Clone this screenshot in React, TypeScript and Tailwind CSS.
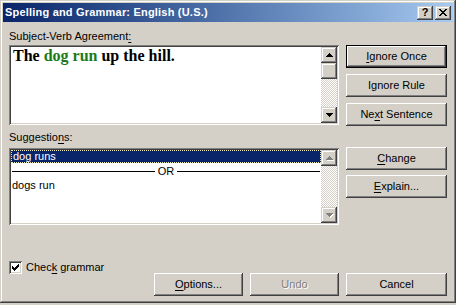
import React from "react";

const raised =
  "shadow-[inset_-1px_-1px_#404040,inset_1px_1px_#ffffff,inset_-2px_-2px_#808080,inset_2px_2px_#d4d0c8]";
const raisedSmall =
  "shadow-[inset_-1px_-1px_#404040,inset_1px_1px_#d4d0c8,inset_-2px_-2px_#808080,inset_2px_2px_#ffffff]";
const defaultBtn =
  "shadow-[inset_0_0_0_1px_#000000,inset_-2px_-2px_#404040,inset_2px_2px_#ffffff,inset_-3px_-3px_#808080]";
const sunken =
  "shadow-[inset_1px_1px_#808080,inset_-1px_-1px_#ffffff,inset_2px_2px_#404040,inset_-2px_-2px_#d4d0c8]";

const Arrow = ({ down, disabled }: { down?: boolean; disabled?: boolean }) => {
  const d = down
    ? "M0 0h7v1h-7z M1 1h5v1h-5z M2 2h3v1h-3z M3 3h1v1h-1z"
    : "M3 0h1v1h-1z M2 1h3v1h-3z M1 2h5v1h-5z M0 3h7v1h-7z";
  return (
    <svg width="8" height="5" viewBox="0 0 8 5" shapeRendering="crispEdges">
      {disabled && <path d={d} fill="#ffffff" transform="translate(1 1)" />}
      <path d={d} fill={disabled ? "#808080" : "#000000"} />
    </svg>
  );
};

const ScrollBtn = ({ down, disabled }: { down?: boolean; disabled?: boolean }) => (
  <div className={`w-[16px] h-[16px] bg-[#d4d0c8] flex items-center justify-center pl-[1px] ${raisedSmall}`}>
    <Arrow down={down} disabled={disabled} />
  </div>
);

const ScrollBar = ({ thumb, disabled }: { thumb?: boolean; disabled?: boolean }) => (
  <div className="w-[16px] h-full flex flex-col">
    <ScrollBtn disabled={disabled} />
    {thumb && <div className={`w-[16px] h-[16px] bg-[#d4d0c8] ${raisedSmall}`} />}
    <div className="flex-1 bg-[repeating-conic-gradient(#d4d0c8_0%_25%,#ffffff_0%_50%)] bg-[length:2px_2px]" />
    <ScrollBtn down disabled={disabled} />
  </div>
);

const Button = ({
  children,
  w = "w-[101px]",
  isDefault,
  disabled,
}: {
  children: React.ReactNode;
  w?: string;
  isDefault?: boolean;
  disabled?: boolean;
}) => (
  <div
    className={`${w} h-[23px] bg-[#d4d0c8] flex items-center justify-center ${isDefault ? defaultBtn : raised} ${
      disabled ? "text-[#808080] [text-shadow:1px_1px_#ffffff]" : "text-black"
    }`}
  >
    <span>{children}</span>
  </div>
);

const U = ({ children }: { children: React.ReactNode }) => (
  <span className="underline underline-offset-[2px]">{children}</span>
);

export default function App() {
  return (
    <div className="w-[456px] h-[305px] bg-[#d4d0c8] font-['Liberation_Sans',Arial,sans-serif] text-[11px] leading-[13px] text-black">
      <div className="h-[303px] flex flex-col p-[3px] bg-[#d4d0c8] shadow-[inset_-1px_-1px_#404040,inset_1px_1px_#d4d0c8,inset_-2px_-2px_#808080,inset_2px_2px_#ffffff]">
        {/* title bar */}
        <div className="h-[19px] flex items-center pl-[2px] pr-[2px] bg-linear-to-r from-[#0a246a] to-[#a6caf0]">
          <span className="text-white font-bold tracking-[0.2px]">Spelling and Grammar: English (U.S.)</span>
          <div className="ml-auto flex gap-[2px]">
            <div className={`w-[16px] h-[14px] bg-[#d4d0c8] flex items-center justify-center font-bold text-[11px] leading-[11px] ${raisedSmall}`}>
              ?
            </div>
            <div className={`w-[16px] h-[14px] bg-[#d4d0c8] flex items-center justify-center ${raisedSmall}`}>
              <svg width="8" height="7" viewBox="0 0 8 7" shapeRendering="crispEdges">
                <path
                  d="M0 0h2v1h-2z M6 0h2v1h-2z M1 1h2v1h-2z M5 1h2v1h-2z M2 2h4v1h-4z M3 3h2v1h-2z M2 4h4v1h-4z M1 5h2v1h-2z M5 5h2v1h-2z M0 6h2v1h-2z M6 6h2v1h-2z"
                  fill="#000000"
                />
              </svg>
            </div>
          </div>
        </div>

        <div className="flex-1 flex flex-col px-[6px]">
          {/* error sentence */}
          <div className="flex">
            <div className="w-[330px] flex flex-col pt-[8px]">
              <div className="h-[13px]">
                Subject-Verb Agreement<U>:</U>
              </div>
              <div className={`mt-[2px] w-[330px] h-[80px] p-[2px] bg-white flex ${sunken}`}>
                <div className="flex-1 pl-[2px] font-['Liberation_Serif','Times_New_Roman',serif] font-bold text-[16px] leading-[18px]">
                  The <span className="text-[#1a7a1a]">dog run</span> up the hill.
                </div>
                <ScrollBar thumb />
              </div>
            </div>
            <div className="ml-[7px] pt-[23px] flex flex-col gap-[6px]">
              <Button isDefault>
                <U>I</U>gnore Once
              </Button>
              <Button>Ignore Rule</Button>
              <Button>
                Ne<U>x</U>t Sentence
              </Button>
            </div>
          </div>

          {/* suggestions */}
          <div className="flex">
            <div className="w-[330px] flex flex-col pt-[5px]">
              <div className="h-[13px]">
                Suggestio<U>n</U>s:
              </div>
              <div className={`mt-[4px] w-[330px] h-[77px] p-[2px] bg-white flex ${sunken}`}>
                <div className="flex-1 flex flex-col">
                  <div className="h-[13px] bg-[#0a246a] text-white pl-[1px] border border-dotted border-[#e8e8b0] leading-[11px]">
                    dog runs
                  </div>
                  <div className="h-[16px] flex items-center px-[1px] gap-[3px]">
                    <div className="flex-1 h-[1px] bg-black" />
                    <span>OR</span>
                    <div className="flex-1 h-[1px] bg-black" />
                  </div>
                  <div className="h-[13px] pl-[1px]">dogs run</div>
                </div>
                <ScrollBar disabled />
              </div>
            </div>
            <div className="ml-[7px] pt-[21px] flex flex-col gap-[5px]">
              <Button>
                <U>C</U>hange
              </Button>
              <Button>
                <U>E</U>xplain...
              </Button>
            </div>
          </div>

          {/* bottom */}
          <div className="flex mt-[36px]">
            <label className="h-[13px] flex items-center gap-[4px] self-start">
              <div className={`w-[13px] h-[13px] bg-white flex items-center justify-center ${sunken}`}>
                <svg width="7" height="7" viewBox="0 0 7 7" shapeRendering="crispEdges">
                  <path
                    d="M6 0h1v1h-1z M5 1h2v1h-2z M0 2h1v1h-1z M4 2h3v1h-3z M0 3h2v1h-2z M3 3h3v1h-3z M0 4h5v1h-5z M1 5h3v1h-3z M2 6h1v1h-1z"
                    fill="#000000"
                  />
                </svg>
              </div>
              <span>
                Chec<U>k</U> grammar
              </span>
            </label>
            <div className="ml-auto flex pt-[12px]">
              <Button w="w-[89px]">
                <U>O</U>ptions...
              </Button>
              <div className="ml-[7px]">
                <Button w="w-[89px]" disabled>
                  Undo
                </Button>
              </div>
              <div className="ml-[7px]">
                <Button>Cancel</Button>
              </div>
            </div>
          </div>
        </div>
      </div>
    </div>
  );
}
